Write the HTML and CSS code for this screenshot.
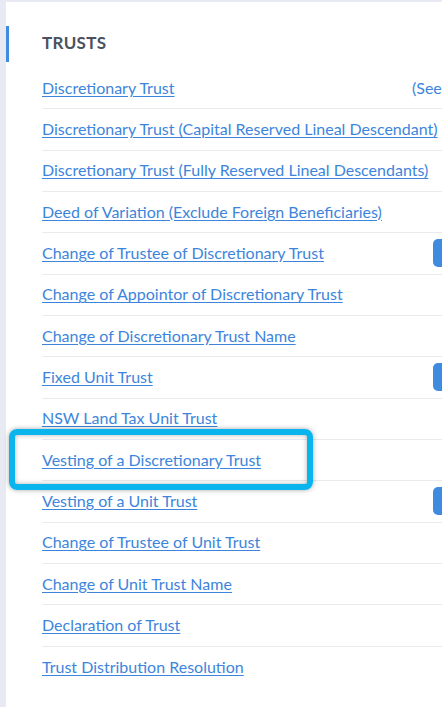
FILE: index.html
```html
<!DOCTYPE html>
<html lang="en">

<head>
    <meta charset="UTF-8">
    <meta name="viewport" content="width=device-width, initial-scale=1.0">
    <title>Trust Documents</title>
    <link rel="stylesheet" href="styles.css">
</head>

<body>
    <div class="panel">
        <h2 class="section-title">TRUSTS</h2>

        <div class="doc-list">
            <div class="doc-row">
                <a href="#">Discretionary Trust</a>
                <span class="doc-note">(See also below)</span>
            </div>
            <div class="doc-row">
                <a href="#">Discretionary Trust (Capital Reserved Lineal Descendant)</a>
            </div>
            <div class="doc-row">
                <a href="#">Discretionary Trust (Fully Reserved Lineal Descendants)</a>
            </div>
            <div class="doc-row">
                <a href="#">Deed of Variation (Exclude Foreign Beneficiaries)</a>
            </div>
            <div class="doc-row">
                <a href="#">Change of Trustee of Discretionary Trust</a>
                <button class="doc-btn">Order</button>
            </div>
            <div class="doc-row">
                <a href="#">Change of Appointor of Discretionary Trust</a>
            </div>
            <div class="doc-row">
                <a href="#">Change of Discretionary Trust Name</a>
            </div>
            <div class="doc-row">
                <a href="#">Fixed Unit Trust</a>
                <button class="doc-btn">Order</button>
            </div>
            <div class="doc-row">
                <a href="#">NSW Land Tax Unit Trust</a>
            </div>
            <div class="doc-row highlighted">
                <a href="#">Vesting of a Discretionary Trust</a>
                <span class="highlight-box"></span>
            </div>
            <div class="doc-row">
                <a href="#">Vesting of a Unit Trust</a>
                <button class="doc-btn">Order</button>
            </div>
            <div class="doc-row">
                <a href="#">Change of Trustee of Unit Trust</a>
            </div>
            <div class="doc-row">
                <a href="#">Change of Unit Trust Name</a>
            </div>
            <div class="doc-row">
                <a href="#">Declaration of Trust</a>
            </div>
            <div class="doc-row last">
                <a href="#">Trust Distribution Resolution</a>
            </div>
        </div>
    </div>
</body>

</html>
```

FILE: styles.css
```css
:root {
    --link-color: #3d85dc;
    --accent-color: #3f8bdf;
    --title-color: #4a5260;
    --line-color: #e9eaee;
    --page-bg: #e8eaf3;
    --mark-color: #0ab4ec;
}

html,
body {
    overflow: hidden;
}

body {
    margin: 0;
    padding: 2px 0 0 6px;
    background: var(--page-bg);
    font-family: 'Lato', 'Liberation Sans', sans-serif;
    color: var(--title-color);
    min-height: 100vh;
    box-sizing: border-box;
}

.panel {
    background: #ffffff;
    width: 640px;
    min-height: 705px;
    padding-top: 24px;
}

.section-title {
    margin: 0 0 6px 0;
    height: 36px;
    line-height: 34px;
    border-left: 3px solid var(--accent-color);
    padding-left: 33px;
    font-size: 17px;
    font-weight: 700;
    letter-spacing: 0.3px;
    color: var(--title-color);
}

.doc-list {
    margin-left: 36px;
}

.doc-row {
    position: relative;
    display: grid;
    grid-template-columns: 370px 1fr;
    align-items: center;
    height: 41.33px;
    padding-bottom: 2px;
    box-sizing: border-box;
    border-bottom: 1px solid var(--line-color);
}

.doc-row.last {
    border-bottom: none;
}

.doc-row a {
    grid-column: 1;
    white-space: nowrap;
    color: var(--link-color);
    font-size: 16px;
    text-decoration: underline;
    text-underline-offset: 2px;
}

.doc-note {
    grid-column: 2;
    color: var(--link-color);
    font-size: 16px;
    white-space: nowrap;
}

.doc-btn {
    grid-column: 2;
    justify-self: start;
    margin-left: 21px;
    margin-top: 2px;
    height: 28px;
    padding: 0 14px;
    border: none;
    border-radius: 5px;
    background: var(--accent-color);
    color: #ffffff;
    font-family: inherit;
    font-size: 14px;
}

.highlight-box {
    position: absolute;
    left: -33px;
    top: -11px;
    width: 304px;
    height: 61px;
    box-sizing: border-box;
    border: 6px solid var(--mark-color);
    border-radius: 8px;
    box-shadow: 0 0 5px rgba(0, 0, 0, 0.35), inset 0 0 5px rgba(0, 0, 0, 0.3);
    pointer-events: none;
}
```
